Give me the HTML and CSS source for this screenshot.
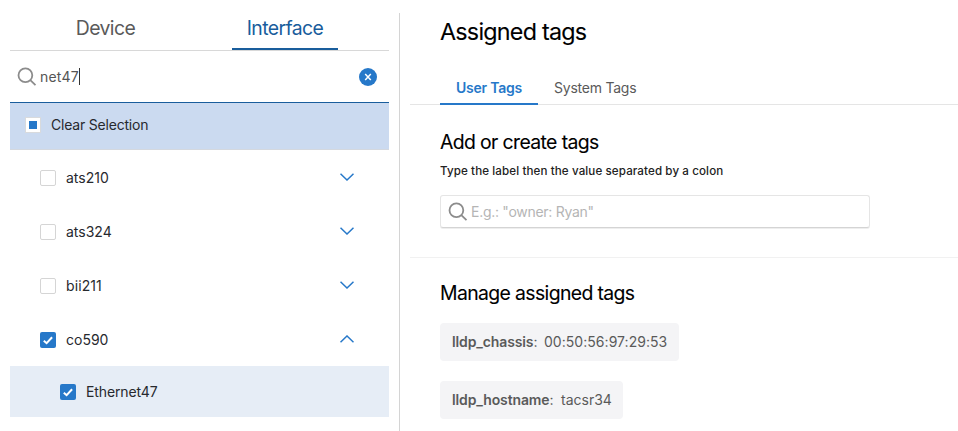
FILE: index.html
```html
<!DOCTYPE html>
<html lang="en">
<head>
<meta charset="utf-8">
<title>Tags</title>
<link rel="stylesheet" href="styles.css">
</head>
<body>
<div class="app">
  <aside class="sidebar">
    <nav class="mode-tabs">
      <div class="mode-tab">Device</div>
      <div class="mode-tab mode-tab--active">Interface</div>
    </nav>
    <div class="search">
      <svg class="search-icon" viewBox="0 0 20 20"><circle cx="8.4" cy="8.2" r="6.9"/><path d="M13.3 13.2l5.2 5"/></svg>
      <span class="query">net47</span>
      <svg class="clear-icon" viewBox="0 0 18 18"><circle cx="9" cy="9" r="9"/><path d="M6.2 6l5.6 6M11.8 6l-5.6 6"/></svg>
    </div>
    <div class="clear-row"><span class="partial"></span><span class="clear-label">Clear Selection</span></div>
    <div class="list">
      <div class="item"><span class="box"></span><span class="name">ats210</span><svg class="chevron" viewBox="0 0 14 8"><path d="M.5.7L7 7 13.5.7"/></svg></div>
      <div class="item"><span class="box"></span><span class="name">ats324</span><svg class="chevron" viewBox="0 0 14 8"><path d="M.5.7L7 7 13.5.7"/></svg></div>
      <div class="item"><span class="box"></span><span class="name name--loose">bii211</span><svg class="chevron" viewBox="0 0 14 8"><path d="M.5.7L7 7 13.5.7"/></svg></div>
      <div class="item"><span class="box box--on"><svg viewBox="0 0 16 16"><path d="M3.8 8.7l2.8 2.5 5.5-6"/></svg></span><span class="name">co590</span><svg class="chevron" viewBox="0 0 14 8"><path d="M.5 7.2L7 1l6.5 6.2"/></svg></div>
      <div class="item item--child"><span class="box box--on"><svg viewBox="0 0 16 16"><path d="M3.8 8.7l2.8 2.5 5.5-6"/></svg></span><span class="name name--child">Ethernet47</span></div>
    </div>
  </aside>
  <main class="main">
    <h1>Assigned tags</h1>
    <nav class="tag-tabs">
      <div class="tag-tab tag-tab--active">User Tags</div>
      <div class="tag-tab">System Tags</div>
    </nav>
    <section class="create">
      <h2>Add or create tags</h2>
      <p class="hint">Type the label then the value separated by a colon</p>
      <div class="field">
        <svg class="search-icon" viewBox="0 0 20 20"><circle cx="8.4" cy="8.2" r="6.9"/><path d="M13.3 13.2l5.2 5"/></svg>
        <span class="placeholder">E.g.: "owner: Ryan"</span>
      </div>
    </section>
    <section class="manage">
      <h2>Manage assigned tags</h2>
      <div class="chip chip--a"><span class="key"><b>lldp_chassis</b>:</span><span class="value">00:50:56:97:29:53</span></div>
      <div class="chip chip--b"><span class="key key--b"><b>lldp_hostname</b>:</span><span>tacsr34</span></div>
    </section>
  </main>
</div>
</body>
</html>
```
FILE: styles.css
```css
* { box-sizing: border-box; }
body { margin: 0; background: #fff; color: #27292e; font: 14px/20px Inter, "Liberation Sans", sans-serif; overflow: hidden; }
svg { display: block; fill: none; flex: none; }
span { white-space: nowrap; }
h1, h2, p { margin: 0; font-weight: 400; color: #000; }
.app { display: flex; height: 431px; }

.sidebar { width: 379px; margin-left: 10px; flex: none; }
.mode-tabs { display: flex; height: 51px; border-bottom: 1px solid #d8d8d8; padding-left: 42px; gap: 73px; }
.mode-tab { width: 107px; height: 50px; padding-top: 16px; text-align: center; font-size: 19.4px; line-height: 24px; letter-spacing: -.6px; color: #5a5a5a; }
.mode-tab--active { width: 106px; color: #195d9c; border-bottom: 2px solid #195d9c; }
.search { display: flex; align-items: center; height: 52px; padding: 0 12px 0 7px; border-bottom: 1px solid #195d9c; }
.search-icon { width: 20px; height: 20px; stroke: #8c8c8c; stroke-width: 1.8; }
.query { margin-left: 3px; height: 17px; line-height: 17px; letter-spacing: .2px; color: #555; border-right: 1px solid #333; }
.clear-icon { width: 18px; height: 18px; margin-left: auto; stroke: #fff; stroke-width: 1.5; }
.clear-icon circle { fill: #2678c9; stroke: none; }
.clear-row { display: flex; align-items: center; height: 47px; padding: 0 0 2px 15px; gap: 10px; background: #cbdaf0; border-bottom: 1px solid #d4d8df; }
.clear-label { letter-spacing: -.2px; }
.partial { width: 16px; height: 16px; border: 4px solid #fff; outline: 1px solid #d8dadd; outline-offset: -1px; background: #2678c9; }
.item { display: flex; align-items: center; height: 54px; padding: 2px 35px 0 30px; }
.item--child { height: 51px; padding: 1px 0 0 50px; background: #e6edf6; }
.box { width: 16px; height: 16px; border: 1px solid #d5d5d5; border-radius: 2px; flex: none; }
.box--on { border: 0; background: #2678c9; }
.box svg { width: 16px; height: 16px; stroke: #fff; stroke-width: 2; }
.name { margin-left: 10px; }
.name--loose { letter-spacing: .1px; }
.name--child { letter-spacing: -.12px; }
.chevron { width: 14px; height: 8px; margin-left: auto; margin-bottom: 2px; stroke: #2678c9; stroke-width: 1.5; }

.main { flex: 1; margin: 13px 0 0 10px; padding-left: 10px; border-left: 1px solid #d4d4d4; }
h1 { height: 59px; padding: 5px 0 0 30px; font-size: 23.3px; line-height: 28px; letter-spacing: -.75px; -webkit-text-stroke: .1px #000; }
.tag-tabs { display: flex; height: 33px; padding-left: 30px; border-bottom: 1px solid #e5e5e5; }
.tag-tab { height: 33px; padding: 6px 16px 0; letter-spacing: -.23px; color: #5a5a5a; }
.tag-tab--active { width: 98px; font-weight: 600; color: #2678c9; border-bottom: 2px solid #2678c9; }
h2 { font-size: 19.4px; line-height: 24px; letter-spacing: -.62px; -webkit-text-stroke: .1px #000; }
.create { height: 153px; padding: 25px 0 0 30px; border-bottom: 1px solid #f1f1f1; }
.hint { margin-top: 9px; font-size: 11.6px; line-height: 16px; font-weight: 500; letter-spacing: .1px; color: #222; }
.field { display: flex; align-items: center; gap: 3px; width: 430px; height: 33px; margin-top: 16px; padding-left: 7px; border: 1px solid #e5e5e5; border-bottom-color: #d4d4d4; border-radius: 3px; box-shadow: 0 1px 0 #eee; color: #b5b5b5; }
.placeholder { letter-spacing: -.28px; }
.manage { padding: 23px 0 0 30px; }
.chip { display: flex; align-items: center; height: 38px; padding-left: 12px; border-radius: 4px; background: #f4f4f6; color: #5a5a5a; }
.chip--a { width: 239px; margin-top: 18px; }
.chip--b { width: 183px; margin-top: 20px; }
.chip b { font-weight: 600; }
.key { width: 92px; letter-spacing: -.12px; }
.key--b { width: 109px; }
.value { letter-spacing: .04px; }
```
